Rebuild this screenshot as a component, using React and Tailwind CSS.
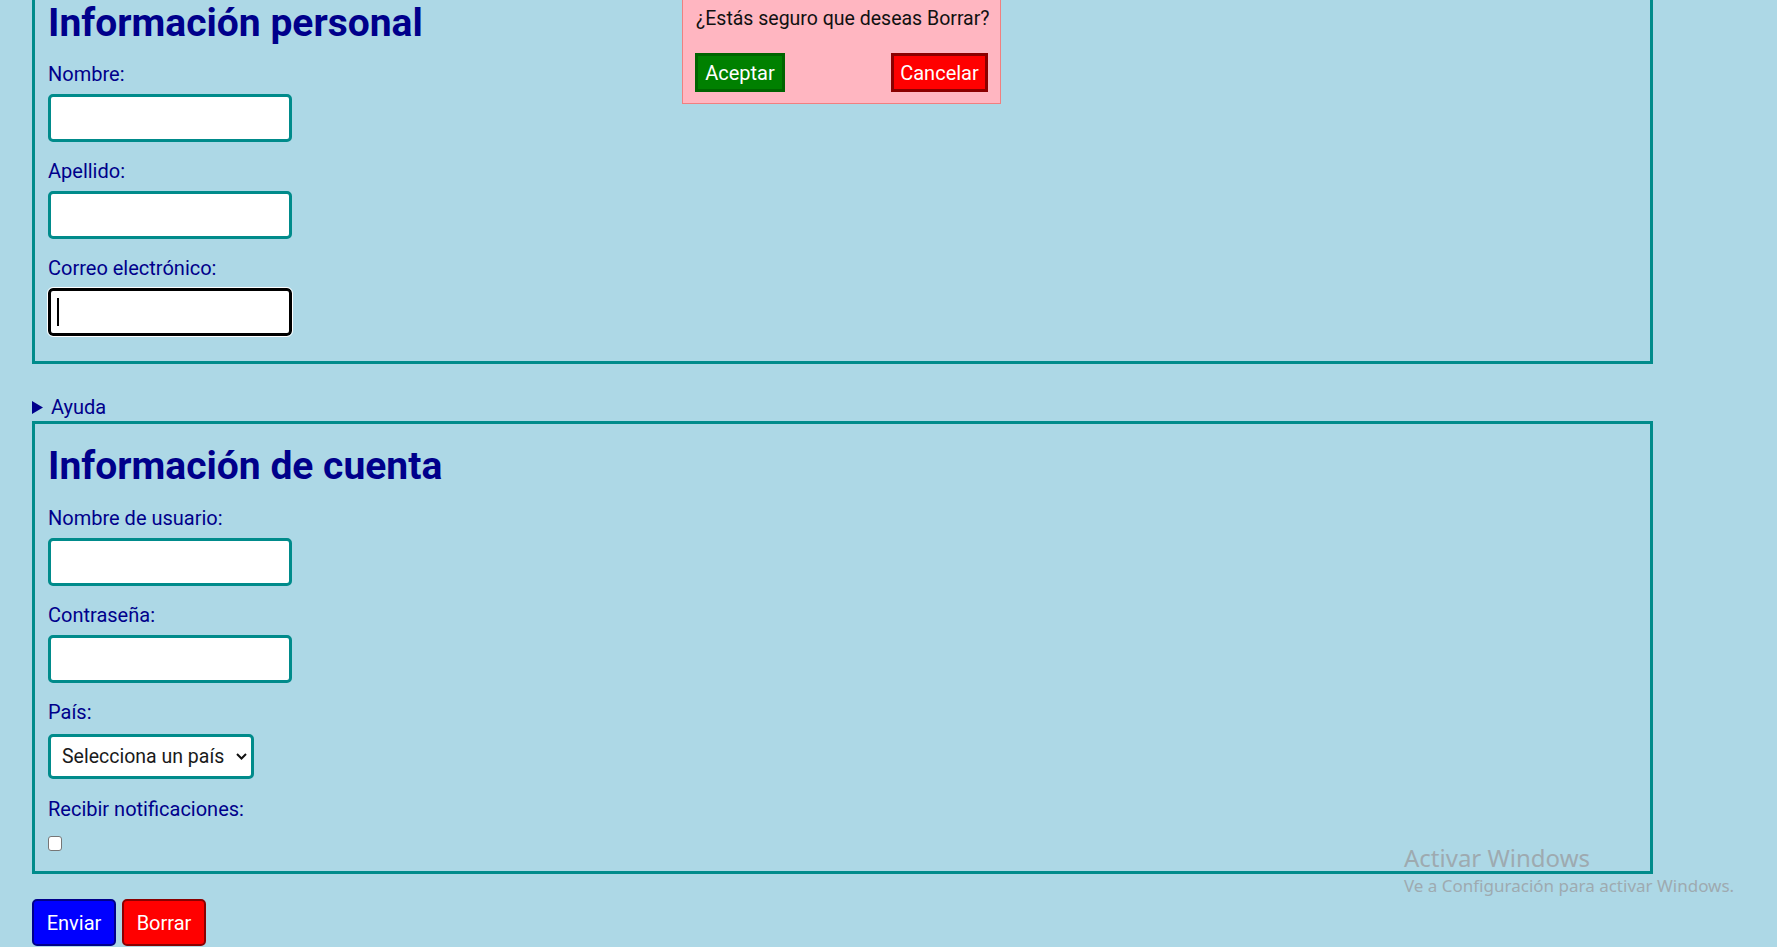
import React from "react";

const font = "font-['Roboto','Noto_Sans',sans-serif]";

function Field({ label, children, first }) {
  return (
    <div className={first ? "mt-[13px]" : "mt-[15px]"}>
      <label className="block text-[20px] leading-[28px] text-[#00008B]">{label}</label>
      <div className="mt-[6px]">{children}</div>
    </div>
  );
}

function TextInput({ focused, type = "text" }) {
  if (focused) {
    return (
      <div className="relative w-[244px]">
        <input
          type={type}
          className="block h-[48px] w-[244px] rounded-[5px] border-[3px] border-black bg-white outline outline-1 outline-white"
        />
        <span className="absolute left-[9px] top-[10px] h-[28px] w-[2px] bg-black" />
      </div>
    );
  }
  return (
    <input
      type={type}
      className="block h-[48px] w-[244px] rounded-[5px] border-[3px] border-[#008B8B] bg-white outline-none"
    />
  );
}

export default function App() {
  return (
    <div className={`relative h-[947px] w-full overflow-hidden bg-[#ADD8E6] ${font}`}>
      <div className="-mt-[22px] pl-[32px]">
        {/* Información personal */}
        <div className="w-[1621px] border-[3px] border-[#008B8B] px-[13px] pt-[19px] pb-[25px]">
          <h1 className="text-[39px] font-bold leading-[47px] text-[#00008B]">Información personal</h1>
          <Field label="Nombre:" first>
            <TextInput />
          </Field>
          <Field label="Apellido:">
            <TextInput />
          </Field>
          <Field label="Correo electrónico:">
            <TextInput focused type="email" />
          </Field>
        </div>

        {/* Ayuda */}
        <div className="mt-[29px] flex h-[28px] items-center gap-[8px] text-[20px] leading-[28px] text-[#00008B]">
          <svg width="11" height="13" viewBox="0 0 11 13" className="shrink-0">
            <path d="M0 0 L11 6.5 L0 13 Z" fill="#00008B" />
          </svg>
          <span>Ayuda</span>
        </div>

        {/* Información de cuenta */}
        <div className="w-[1621px] border-[3px] border-[#008B8B] px-[13px] pt-[19px] pb-[20px]">
          <h1 className="text-[39px] font-bold leading-[47px] text-[#00008B]">Información de cuenta</h1>
          <div className="mt-[14px]">
            <label className="block text-[20px] leading-[28px] text-[#00008B]">Nombre de usuario:</label>
            <div className="mt-[6px]">
              <TextInput />
            </div>
          </div>
          <Field label="Contraseña:">
            <TextInput type="password" />
          </Field>
          <div className="mt-[15px]">
            <label className="block text-[20px] leading-[28px] text-[#00008B]">País:</label>
            <div className="relative mt-[8px] w-[206px]">
              <select className="block h-[45px] w-[206px] appearance-none rounded-[5px] border-[3px] border-[#008B8B] bg-white pl-[11px] text-[19.5px] text-[#1a1a1a] outline-none">
                <option>Selecciona un país</option>
              </select>
              <svg
                width="11"
                height="7"
                viewBox="0 0 11 7"
                className="pointer-events-none absolute left-[188px] top-[19px]"
              >
                <path d="M1 1 L5.5 5.5 L10 1" fill="none" stroke="#111" strokeWidth="2" />
              </svg>
            </div>
          </div>
          <div className="mt-[16px]">
            <label className="block text-[20px] leading-[28px] text-[#00008B]">Recibir notificaciones:</label>
            <input
              type="checkbox"
              className="mt-[13px] block h-[15px] w-[14px] appearance-none rounded-[3px] border border-[#767676] bg-white"
            />
          </div>
        </div>

        {/* Botones */}
        <div className="mt-[25px] flex gap-[6px]">
          <button className="h-[47px] w-[84px] rounded-[5px] border-2 border-[#00008B] bg-[#0000FF] text-[20px] text-white">
            Enviar
          </button>
          <button className="h-[47px] w-[84px] rounded-[5px] border-2 border-[#8B0000] bg-[#FF0000] text-[20px] text-white">
            Borrar
          </button>
        </div>
      </div>

      {/* Confirmación */}
      <div className="absolute left-[682px] top-[-12px] w-[319px] border border-[#F08080] bg-[#FFB6C1] px-[12px] pt-[16px] pb-[11px]">
        <p className="whitespace-nowrap pl-[1px] text-[19.5px] leading-[28px] text-[#111]">¿Estás seguro que deseas Borrar?</p>
        <div className="mt-[20px] flex justify-between">
          <button className="h-[39px] w-[90px] border-[3px] border-[#006400] bg-[#008000] text-[20px] text-white">
            Aceptar
          </button>
          <button className="h-[39px] w-[97px] border-[3px] border-[#8B0000] bg-[#FF0000] text-[20px] text-white">
            Cancelar
          </button>
        </div>
      </div>

      {/* Marca de agua */}
      <div className="pointer-events-none absolute left-[1404px] top-[842px] font-['Noto_Sans',sans-serif] text-[#9eaab0]">
        <div className="text-[24px] leading-[32px]">Activar Windows</div>
        <div className="text-[17px] leading-[24px]">Ve a Configuración para activar Windows.</div>
      </div>
    </div>
  );
}
